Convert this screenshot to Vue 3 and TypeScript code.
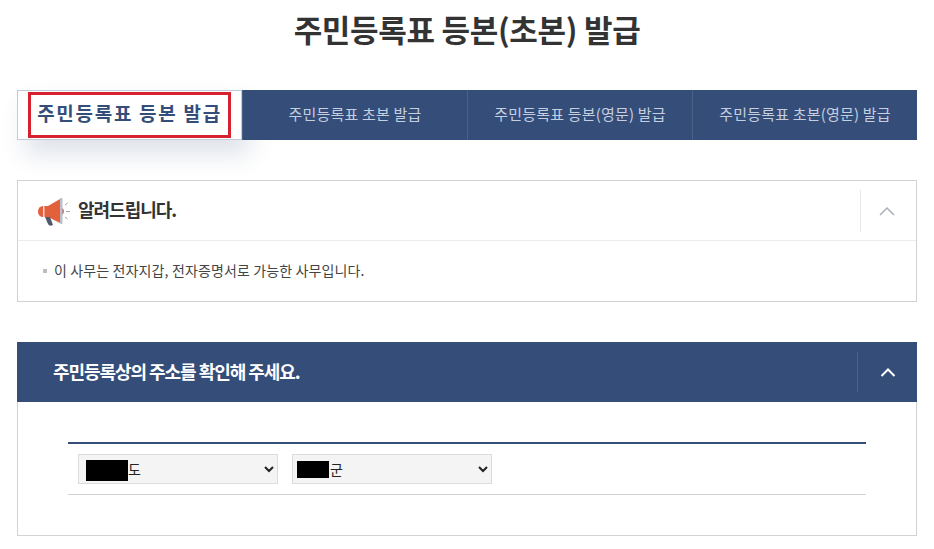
<script setup lang="ts">
const tabs: string[] = ['주민등록표 초본 발급', '주민등록표 등본(영문) 발급', '주민등록표 초본(영문) 발급']
</script>

<template>
  <div class="page">
    <h1 class="title">주민등록표 등본(초본) 발급</h1>

    <nav class="tabs">
      <div class="tab active"><span class="mark">주민등록표 등본 발급</span></div>
      <div v-for="t in tabs" :key="t" class="tab">{{ t }}</div>
    </nav>

    <section class="notice">
      <header class="notice-head">
        <svg class="horn" width="34" height="30" viewBox="0 0 34 30" aria-hidden="true">
          <path d="M5 10 H10 V21 H5 A5 5.500 0 0 1 5 10 Z" fill="#e2603c" />
          <rect x="5" y="10" width="1.500" height="11" fill="#f3d6cc" />
          <path d="M10 10 L22 3 V27 L10 21 Z" fill="#e2603c" />
          <path d="M7 21 H12 L15 29 Q11.500 31 10 28 Z" fill="#4e5a6c" />
          <rect x="22" y="2" width="2.500" height="26" rx="1" fill="#b9c0c9" />
          <path d="M24.500 12 Q27 15 24.500 19 Z" fill="#9d3f45" />
          <path d="M27 9 L29.500 7 M28 15.500 H32 M27 21 L29.500 23" stroke="#9aa3ad" stroke-width="1" fill="none" />
        </svg>
        <h2 class="notice-title">알려드립니다.</h2>
        <div class="toggle">
          <svg class="chev" width="16" height="10" viewBox="0 0 16 10" aria-hidden="true">
            <path d="M1 9 L8 2 L15 9" fill="none" stroke="#a9afb8" stroke-width="1.500" />
          </svg>
        </div>
      </header>
      <div class="notice-body">
        <span class="bullet"></span>
        <p class="notice-text">이 사무는 전자지갑, 전자증명서로 가능한 사무입니다.</p>
      </div>
    </section>

    <section class="address">
      <header class="address-head">
        <h2 class="address-title">주민등록상의 주소를 확인해 주세요.</h2>
        <div class="toggle dark">
          <svg width="16" height="10" viewBox="0 0 16 10" aria-hidden="true">
            <path d="M1.500 9 L8 2.500 L14.500 9" fill="none" stroke="#ffffff" stroke-width="2" />
          </svg>
        </div>
      </header>
      <div class="address-body">
        <div class="form-row">
          <div class="field">
            <select class="select sel-province">
              <option>도</option>
            </select>
            <span class="redact province"></span>
          </div>
          <div class="field">
            <select class="select sel-county">
              <option>군</option>
            </select>
            <span class="redact county"></span>
          </div>
        </div>
      </div>
    </section>
  </div>
</template>

<style scoped>
.page {
  width: 900px;
  padding: 0 17px;
  height: 549px;
  overflow: hidden;
  font-family: "Noto Sans CJK KR", "Noto Sans", sans-serif;
  color: #333;
}
.title {
  margin: 0;
  padding-top: 6px;
  height: 90px;
  box-sizing: border-box;
  line-height: 46px;
  text-align: center;
  font-size: 31px;
  font-weight: 700;
  letter-spacing: -0.3px;
  color: #333;
}
.tabs {
  display: grid;
  grid-template-columns: repeat(4, 225px);
  height: 50px;
}
.tab {
  display: flex;
  align-items: center;
  justify-content: center;
  background: #344d79;
  color: #c5cfe0;
  font-size: 15px;
  letter-spacing: 0.2px;
  padding-bottom: 4px;
  border-left: 1px solid #4a618a;
  box-sizing: border-box;
}
.tab.active {
  background: #fff;
  border: 1px solid #c3cbd9;
  box-shadow: 8px 14px 24px rgba(52, 77, 121, 0.16);
  padding-bottom: 0;
}
.mark {
  box-sizing: border-box;
  width: 203px;
  height: 46px;
  border: 3px solid #d6212f;
  padding-bottom: 5px;
  display: flex;
  align-items: center;
  justify-content: center;
  font-size: 19px;
  letter-spacing: 1.7px;
  font-weight: 700;
  color: #344d79;
  white-space: nowrap;
}
.notice {
  margin-top: 40px;
  border: 1px solid #d2d2d2;
  height: 122px;
  box-sizing: border-box;
}
.notice-head {
  height: 60px;
  box-sizing: border-box;
  display: flex;
  align-items: center;
  padding-left: 20px;
  border-bottom: 1px solid #ececec;
}
.horn {
  margin-right: 6px;
}
.notice-title {
  margin: 0 0 3px;
  font-size: 18px;
  font-weight: 700;
  letter-spacing: -1px;
  color: #333;
  flex: 1;
}
.toggle {
  width: 55px;
  height: 42px;
  border-left: 1px solid #e8e8e8;
  display: flex;
  align-items: center;
  justify-content: center;
}
.chev {
  margin-right: 3px;
  margin-top: 1px;
}
.notice-body {
  display: flex;
  align-items: center;
  height: 60px;
  padding-left: 25px;
}
.bullet {
  width: 4px;
  height: 4px;
  background: #bdbdbd;
  margin-right: 7px;
}
.notice-text {
  margin: 0 0 3px;
  font-size: 14px;
  letter-spacing: 0.13px;
  color: #444;
}
.address {
  margin-top: 40px;
  height: 194px;
  box-sizing: border-box;
  border: 1px solid #d2d2d2;
  border-top: 0;
}
.address-head {
  height: 60px;
  margin: 0 -1px;
  background: #344d79;
  display: flex;
  align-items: center;
  padding-left: 36px;
}
.address-title {
  flex: 1;
  margin: 0 0 3px;
  font-size: 18px;
  font-weight: 700;
  letter-spacing: -1.05px;
  color: #fff;
}
.toggle.dark {
  border-left-color: #4a618a;
  width: 59px;
  height: 40px;
}
.address-body {
  padding: 40px 50px 0;
}
.form-row {
  display: flex;
  gap: 14px;
  height: 53px;
  padding: 10px 10px 0;
  box-sizing: border-box;
  border-top: 2px solid #344d79;
  border-bottom: 1px solid #d2d2d2;
}
.field {
  position: relative;
  width: 200px;
  height: 30px;
}
.select {
  width: 200px;
  height: 30px;
  box-sizing: border-box;
  border: 1px solid #dcdcdc;
  background: #f4f4f4;
  font-family: "Noto Sans CJK KR", sans-serif;
  font-size: 14px;
  color: #222;
  border-radius: 0;
}
.sel-province {
  padding-left: 45px;
}
.sel-county {
  padding-left: 33px;
}
.redact {
  position: absolute;
  top: 6px;
  height: 21px;
  background: #000;
}
.province {
  left: 8px;
  width: 42px;
}
.county {
  left: 5px;
  top: 7px;
  width: 32px;
  height: 17px;
}
</style>
